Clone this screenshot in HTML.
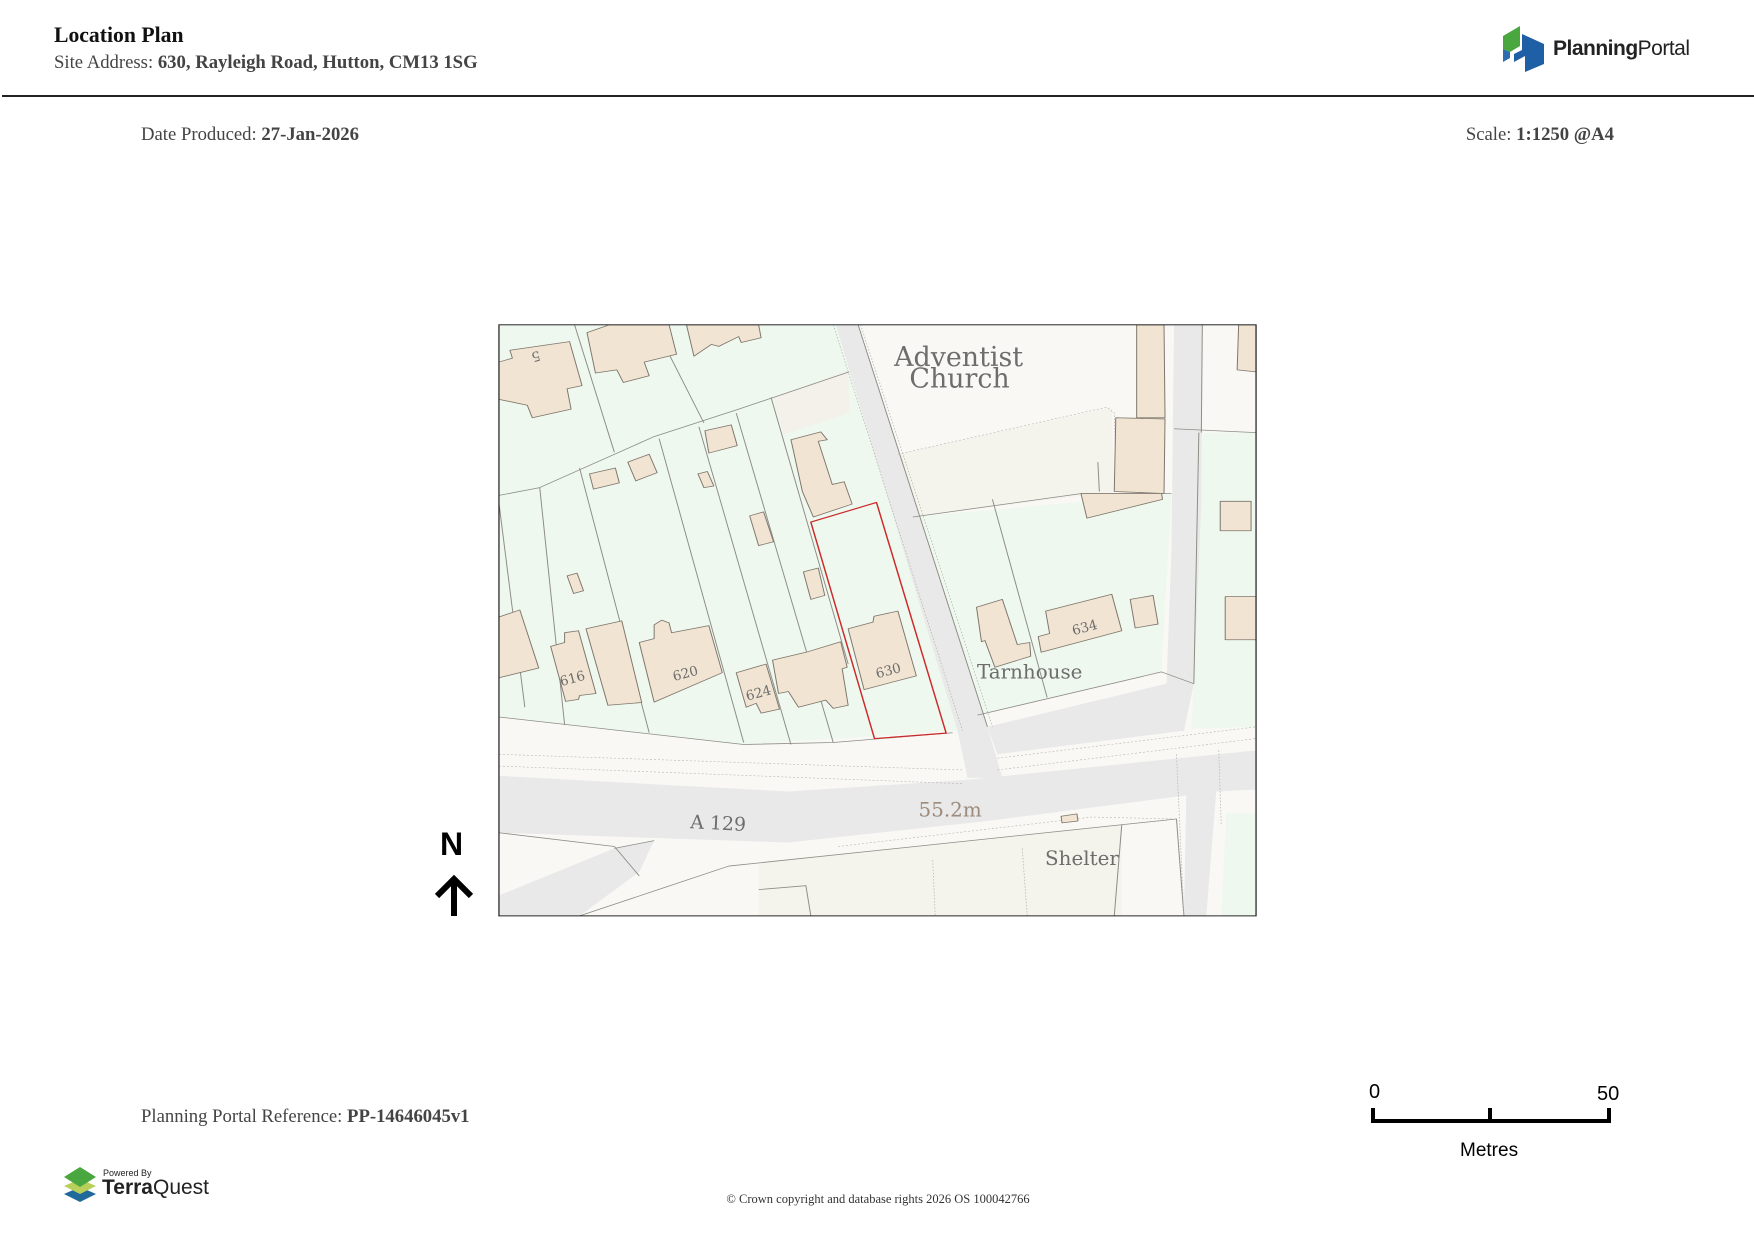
<!DOCTYPE html>
<html><head><meta charset="utf-8"><style>
html,body{margin:0;padding:0;background:#fff;}
body{width:1754px;height:1241px;position:relative;overflow:hidden;font-family:"Liberation Serif",serif;color:#333;}
.a{position:absolute;white-space:nowrap;}
</style></head><body>
<div class="a" style="left:54px;top:23px;font-size:21.7px;font-weight:bold;color:#111;">Location Plan</div>
<div class="a" style="left:54px;top:52px;font-size:18.7px;color:#444;">Site Address: <b>630, Rayleigh Road, Hutton, CM13 1SG</b></div>
<svg class="a" style="left:1500px;top:24px" width="48" height="50" viewBox="0 0 48 50">
<polygon points="3,12 20,2 20,22 10,28 3,25" fill="#4aa63f"/>
<polygon points="3,25 10,28 10,34 3,38" fill="#2f6db0"/>
<polygon points="22,10 44,20 44,40 25,48 25,32 14,38 14,30 22,26" fill="#1f5fa6"/>
</svg>
<div class="a" style="left:1553px;top:37px;font-family:'Liberation Sans',sans-serif;font-size:21px;color:#222;letter-spacing:-0.5px;"><b>Planning</b>Portal</div>
<div class="a" style="left:2px;top:95px;width:1752px;height:1.5px;background:#222;"></div>
<div class="a" style="left:141px;top:124px;font-size:18.7px;color:#444;">Date Produced: <b>27-Jan-2026</b></div>
<div class="a" style="right:140px;top:124px;font-size:18.7px;color:#444;">Scale: <b>1:1250 @A4</b></div>

<svg class="a" style="left:490px;top:315px" width="776" height="615" viewBox="0 0 1560 1568" preserveAspectRatio="none">
<defs><clipPath id="c"><rect x="18" y="25" width="1522" height="1507"/></clipPath></defs>
<g clip-path="url(#c)" stroke-linejoin="round">
<rect x="0" y="0" width="1560" height="1568" fill="#f9f8f5"/>
<polygon points="18,25 700,25 940,1060 510,1095 18,1025" fill="#eff8ef"/>
<polygon points="570,210 720,140 722,250 590,305" fill="#f3f1ea"/>
<polygon points="820,355 1250,235 1255,450 850,515" fill="#f4f3ec"/>
<polygon points="850,515 1370,455 1350,910 980,1020 945,925" fill="#eff8ef"/>
<polygon points="1425,300 1540,300 1540,1050 1410,1055 1415,940" fill="#eff8ef"/>
<polygon points="1480,1270 1540,1270 1540,1532 1470,1532" fill="#eff8ef"/>
<polygon points="1375,25 1432,25 1430,480 1415,940 1395,1060 1350,1060 1360,940 1370,600" fill="#e9e9e9"/>
<polygon points="695,25 740,25 1000,1050 1030,1180 960,1180 940,1060" fill="#e9e9e9"/>
<polygon points="1000,1050 1360,940 1395,1060 1020,1120" fill="#e9e9e9"/>
<polygon points="18,1175 600,1215 960,1185 1540,1110 1540,1210 1460,1215 1000,1290 600,1345 18,1320" fill="#e9e9e9"/>
<polygon points="1400,1215 1460,1215 1440,1532 1395,1532" fill="#e9e9e9"/>
<polygon points="18,1480 250,1360 330,1340 300,1420 180,1532 18,1532" fill="#e9e9e9"/>
<polygon points="540,1395 1270,1300 1270,1532 540,1532" fill="#f4f3ec"/>
<g fill="none" stroke="#8d8d86" stroke-width="2">
<polyline points="18,1025 510,1095 690,1090 930,1065"/>
<polyline points="18,460 100,440 330,310 500,240 722,145"/>
<line x1="170" y1="25" x2="250" y2="350"/><line x1="330" y1="25" x2="430" y2="275"/>
<line x1="100" y1="440" x2="150" y2="1045"/><line x1="180" y1="390" x2="320" y2="1065"/>
<line x1="340" y1="315" x2="510" y2="1090"/><line x1="420" y1="285" x2="605" y2="1095"/>
<line x1="495" y1="250" x2="690" y2="1090"/><line x1="565" y1="210" x2="720" y2="890"/>
<line x1="18" y1="480" x2="70" y2="1000"/>
<line x1="740" y1="25" x2="1000" y2="1050"/>
<polyline points="850,515 1190,455 1370,455"/>
<line x1="1010" y1="470" x2="1120" y2="975"/>
<polyline points="980,1020 1350,910 1415,940"/>
<line x1="1432" y1="25" x2="1430" y2="300"/><line x1="1375" y1="290" x2="1540" y2="300"/>
<line x1="1425" y1="300" x2="1415" y2="940"/>
<polyline points="18,1320 250,1355 300,1430"/>
<polyline points="250,1360 330,1340"/>
<polyline points="180,1532 480,1405 1380,1285 1395,1532"/>
<line x1="1270" y1="1300" x2="1255" y2="1532"/>
<polyline points="540,1465 635,1455 645,1532"/>
<line x1="1222" y1="375" x2="1225" y2="450"/>
</g>
<g fill="none" stroke="#b5b5ae" stroke-width="1.5" stroke-dasharray="4,4">
<line x1="690" y1="25" x2="950" y2="1060"/><line x1="745" y1="25" x2="1010" y2="1050"/>
<polyline points="18,1120 950,1160"/><polyline points="18,1150 950,1195"/>
<polyline points="1020,1130 1540,1050"/><polyline points="1020,1160 1540,1080"/>
<polyline points="820,355 1240,235 1255,250 1260,450"/>
<polyline points="700,1355 1210,1280 1380,1285"/>
<line x1="890" y1="1390" x2="895" y2="1532"/><line x1="1070" y1="1360" x2="1080" y2="1532"/>
<line x1="1380" y1="1120" x2="1395" y2="1532"/><line x1="1465" y1="1110" x2="1470" y2="1300"/>
</g>
<g fill="#f1e4d2" stroke="#7e766c" stroke-width="2">
<polygon points="18,120 45,110 40,90 160,68 185,180 155,188 163,240 85,262 75,230 18,215"/>
<polygon points="195,45 240,25 360,25 375,100 310,120 320,155 268,172 255,140 212,148"/>
<polygon points="395,25 540,25 545,58 505,70 500,55 460,80 445,75 410,105"/>
<polygon points="432,295 485,280 497,333 440,352"/>
<polygon points="200,405 252,390 260,428 208,444"/>
<polygon points="277,375 320,355 336,402 293,423"/>
<polygon points="418,405 437,399 450,436 430,440"/>
<polygon points="605,318 665,298 678,318 660,322 688,432 712,425 728,482 650,515 628,450"/>
<polygon points="522,512 550,502 570,578 540,588"/>
<polygon points="155,665 175,658 188,703 168,710"/>
<polygon points="630,655 660,645 673,715 645,725"/>
<polygon points="18,770 60,752 98,900 18,925"/>
<polygon points="122,845 150,835 150,810 178,805 213,965 180,970 178,980 152,985"/>
<polygon points="193,800 265,780 305,988 237,995"/>
<polygon points="300,835 330,825 330,790 345,778 360,785 365,810 440,792 467,912 330,987"/>
<polygon points="495,912 555,890 582,1005 545,1015 535,990 515,1000"/>
<polygon points="568,880 635,860 705,833 718,898 708,902 720,995 690,1003 675,982 620,1000 600,960 580,965"/>
<polygon points="720,800 770,783 772,768 820,755 857,920 752,955"/>
<polygon points="978,745 1030,725 1060,840 1085,835 1087,870 1015,898 995,830 988,833"/>
<polygon points="1117,755 1250,712 1270,805 1108,860 1102,820 1125,812"/>
<polygon points="1287,725 1333,715 1343,788 1297,798"/>
<polygon points="1468,475 1530,475 1530,550 1468,550"/>
<polygon points="1478,718 1540,718 1540,828 1478,828"/>
<polygon points="1300,25 1355,25 1357,262 1300,262"/>
<polygon points="1258,262 1357,265 1355,455 1255,450"/>
<polygon points="1188,455 1350,455 1352,470 1200,518"/>
<polygon points="1505,25 1540,25 1540,145 1502,140"/>
<polygon points="1148,1278 1180,1272 1182,1290 1150,1295"/>
</g>
<polygon points="645,528 777,478 917,1066 773,1080" fill="none" stroke="#cc2a2a" stroke-width="3"/>
<g font-family="DejaVu Serif, serif" fill="#6d6d6d" text-anchor="middle">
<g transform="translate(942 130) scale(1 1.275)"><text font-size="54">Adventist</text></g>
<g transform="translate(944 185) scale(1 1.275)"><text font-size="54">Church</text></g>
<g transform="translate(1085 927) scale(1 1.275)"><text font-size="40">Tarnhouse</text></g>
<g transform="translate(1190 1402) scale(1 1.275)"><text font-size="40">Shelter</text></g>
<g transform="translate(458 1312) scale(1 1.275) rotate(3)"><text font-size="38">A 129</text></g>
<g transform="translate(925 1278) scale(1 1.275)"><text font-size="40" fill="#9c8b7c">55.2m</text></g>
<g font-size="27">
<g transform="translate(168 938) scale(1 1.275) rotate(-15)"><text>616</text></g>
<g transform="translate(395 925) scale(1 1.275) rotate(-15)"><text>620</text></g>
<g transform="translate(542 975) scale(1 1.275) rotate(-15)"><text>624</text></g>
<g transform="translate(803 918) scale(1 1.275) rotate(-15)"><text>630</text></g>
<g transform="translate(1198 808) scale(1 1.275) rotate(-15)"><text>634</text></g>
<g transform="translate(92 104) scale(1 1.275) rotate(165)"><text y="8">5</text></g>
</g></g>
</g>
<rect x="18" y="25" width="1522" height="1507" fill="none" stroke="#222" stroke-width="2.5"/>
</svg>

<div class="a" style="left:440px;top:826px;font-family:'Liberation Sans',sans-serif;font-size:32px;font-weight:bold;color:#000;">N</div>
<svg class="a" style="left:433px;top:874px" width="42" height="44" viewBox="0 0 42 44">
<path d="M21 42 V6 M4 22 L21 5 L38 22" fill="none" stroke="#000" stroke-width="6"/>
</svg>

<div class="a" style="left:141px;top:1106px;font-size:18.7px;color:#444;">Planning Portal Reference: <b>PP-14646045v1</b></div>

<svg class="a" style="left:62px;top:1165px" width="36" height="40" viewBox="0 0 36 40">
<polygon points="18,22 34,29 18,37 2,29" fill="#1f6a9a"/>
<polygon points="18,14 34,21 18,29 2,21" fill="#b8cf5a"/>
<polygon points="18,2 34,12 18,22 2,12" fill="#4aa63f"/>
</svg>
<div class="a" style="left:103px;top:1168px;font-family:'Liberation Sans',sans-serif;font-size:9px;color:#222;">Powered By</div>
<div class="a" style="left:102px;top:1176px;font-family:'Liberation Sans',sans-serif;font-size:21px;color:#222;"><b>Terra</b>Quest</div>
<div class="a" style="left:0;width:1756px;text-align:center;top:1192px;font-size:12.5px;color:#333;">© Crown copyright and database rights 2026 OS 100042766</div>

<div class="a" style="left:1369px;top:1081px;font-family:'Liberation Sans',sans-serif;font-size:20px;color:#000;">0</div>
<div class="a" style="left:1597px;top:1083px;font-family:'Liberation Sans',sans-serif;font-size:20px;color:#000;">50</div>
<div class="a" style="left:1371px;top:1119px;width:240px;height:4px;background:#000;"></div>
<div class="a" style="left:1371px;top:1108px;width:4px;height:15px;background:#000;"></div>
<div class="a" style="left:1488px;top:1108px;width:4px;height:15px;background:#000;"></div>
<div class="a" style="left:1607px;top:1108px;width:4px;height:15px;background:#000;"></div>
<div class="a" style="left:1460px;top:1140px;font-family:'Liberation Sans',sans-serif;font-size:19px;color:#000;">Metres</div>
</body></html>
